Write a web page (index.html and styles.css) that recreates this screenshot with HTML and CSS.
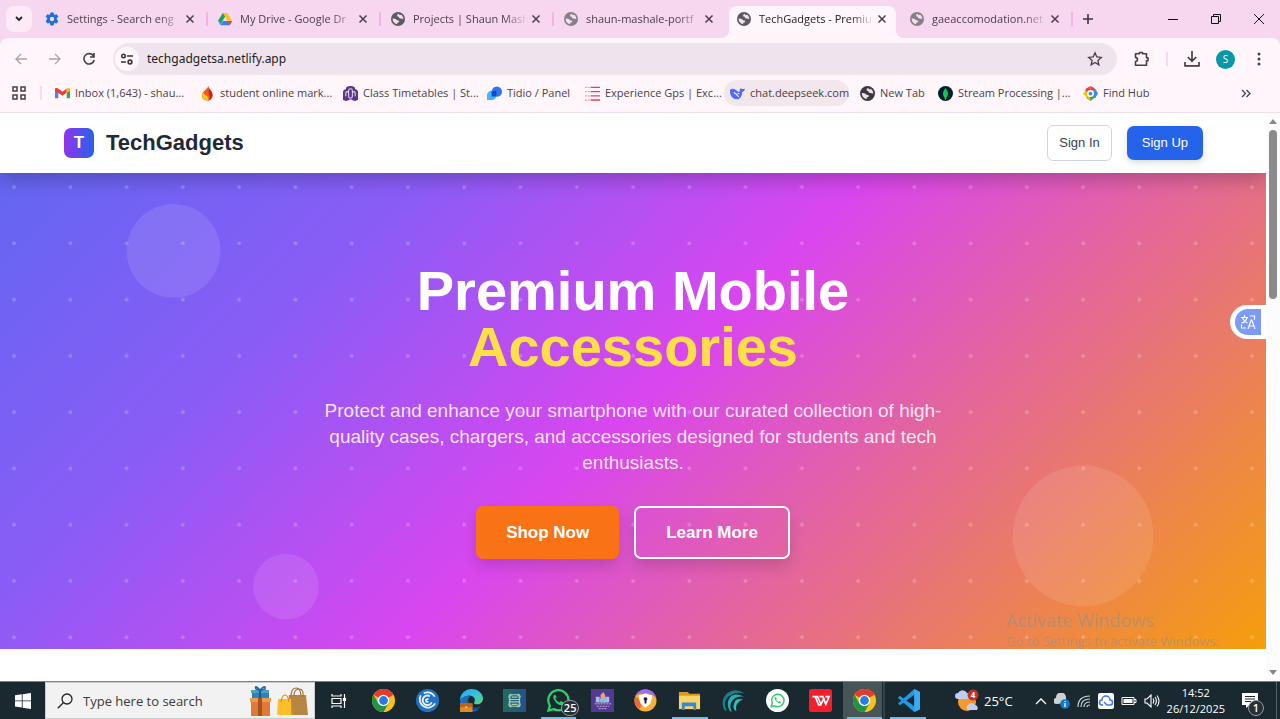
FILE: index.html
```html
<!DOCTYPE html>
<html lang="en">
<head>
<meta charset="utf-8">
<title>TechGadgets - Premium Mobile Accessories</title>
<link rel="stylesheet" href="styles.css">
</head>
<body>
<svg class="defs" aria-hidden="true">
  <symbol id="globe" viewBox="0 0 16 16"><circle cx="8" cy="8" r="8" fill="currentColor"/><path d="M8.500 2Q6.800 2.500 7 4.200 7.200 5.500 8.800 5.400 9 7 10.500 7.400 12.500 7.200 14.200 8.200 14 4.600 11.500 2.900L10.200 3.600zM1.800 7.500Q2 12.600 7 14.100L7.200 12.300Q9.500 12 9.600 10.300 8.500 9.500 6.800 9.300 6.300 7.700 4.300 7.600z" fill="#f6def1"/></symbol>
  <symbol id="x" viewBox="0 0 10 10"><path d="M1.500 1.500l7 7M8.500 1.500l-7 7" stroke="currentColor" stroke-width="1.500" fill="none"/></symbol>
  <symbol id="chrome" viewBox="0 0 24 24"><circle cx="12" cy="12" r="12" fill="#fbc116"/><path d="M12 12L1.600 6A12 12 0 0 1 22.400 6z" fill="#e33b2e"/><path d="M12 6h10.400A12 12 0 0 0 12 0z" fill="#e33b2e"/><path d="M1.600 6A12 12 0 0 0 12 24l5.200-9L12 12 6.800 15z" fill="#229342"/><circle cx="12" cy="12" r="6" fill="#fff"/><circle cx="12" cy="12" r="4.600" fill="#2c7be5"/></symbol>
</svg>

<header class="browser">
  <div class="tabstrip">
    <button class="tab-search" aria-label="Search tabs"><svg width="10" height="8" viewBox="0 0 10 8"><path d="M2 2l3 3 3-3" fill="none" stroke="#222" stroke-width="1.800"/></svg></button>
    <div class="tabs">
      <div class="tab"><svg class="fav" viewBox="0 0 16 16"><path d="M6.700 1h2.600l.5 2 1.500.8 2-.7 1.400 2.300-1.500 1.500v1.900l1.500 1.500-1.400 2.400-2-.6-1.500.8-.5 2.100H6.700l-.5-2.100-1.500-.8-2 .6-1.400-2.400 1.500-1.500V6.900L1.300 5.400l1.400-2.300 2 .7L6.200 3z" fill="#1a6fe0" stroke="#1a6fe0"/><circle cx="8" cy="8" r="2.500" fill="#f6d7ef"/></svg><span class="title">Settings - Search eng</span><button class="close" aria-label="Close tab"><svg><use href="#x"/></svg></button></div>
      <div class="tab"><svg class="fav" viewBox="0 0 16 16"><path d="M5.500 1h5L8 5.500 3 14 0 10z" fill="#1fa363"/><path d="M5.500 1h5L16 10h-5z" fill="#fcc20f"/><path d="M0 10.200L2.800 15h10.400L16 10.200H5.600L3 14.500z" fill="#3f7ee8"/><path d="M11 10.200h5L13.300 15z" fill="#e8453c"/></svg><span class="title">My Drive - Google Dr</span><button class="close" aria-label="Close tab"><svg><use href="#x"/></svg></button></div>
      <div class="tab"><svg class="fav"><use href="#globe"/></svg><span class="title">Projects | Shaun Mash</span><button class="close" aria-label="Close tab"><svg><use href="#x"/></svg></button></div>
      <div class="tab plain"><svg class="fav dim"><use href="#globe"/></svg><span class="title">shaun-mashale-portf</span><button class="close" aria-label="Close tab"><svg><use href="#x"/></svg></button></div>
      <div class="tab active"><svg class="fav"><use href="#globe"/></svg><span class="title">TechGadgets - Premiu</span><button class="close" aria-label="Close tab"><svg><use href="#x"/></svg></button></div>
      <div class="tab"><svg class="fav dim"><use href="#globe"/></svg><span class="title">gaeaccomodation.net</span><button class="close" aria-label="Close tab"><svg><use href="#x"/></svg></button></div>
    </div>
    <button class="new-tab" aria-label="New tab"><svg width="12" height="12" viewBox="0 0 12 12"><path d="M6 1v10M1 6h10" stroke="#42313f" stroke-width="1.600"/></svg></button>
    <div class="window-controls">
      <button aria-label="Minimise"><svg width="10" height="10" viewBox="0 0 10 10"><path d="M0 5.500h10" stroke="#111"/></svg></button>
      <button aria-label="Restore"><svg width="10" height="10" viewBox="0 0 10 10"><path d="M.5 2.500h7v7h-7zM2.500 2.500v-2h7v7h-2" fill="none" stroke="#111"/></svg></button>
      <button aria-label="Close"><svg width="10" height="10" viewBox="0 0 10 10"><path d="M0 0l10 10M10 0L0 10" stroke="#111"/></svg></button>
    </div>
  </div>

  <div class="toolbar">
    <button class="nav" aria-label="Back"><svg width="14" height="14" viewBox="0 0 14 14"><path d="M13 7H2M7 2L2 7l5 5" fill="none" stroke="#ada3ab" stroke-width="1.400"/></svg></button>
    <button class="nav" aria-label="Forward"><svg width="14" height="14" viewBox="0 0 14 14"><path d="M1 7h11M7 2l5 5-5 5" fill="none" stroke="#ada3ab" stroke-width="1.400"/></svg></button>
    <button class="nav" aria-label="Reload"><svg width="14" height="14" viewBox="0 0 14 14"><path d="M11.500 4A5.200 5.200 0 1 0 12.200 8M12 1v4H8" fill="none" stroke="#4b3d48" stroke-width="1.600"/></svg></button>
    <div class="omnibox">
      <button class="site-info" aria-label="Site information"><svg width="14" height="12" viewBox="0 0 14 12"><g fill="none" stroke="#3d333b" stroke-width="1.600"><circle cx="3.500" cy="3" r="1.700"/><path d="M7 3h6M1 9h5"/><circle cx="10" cy="9" r="1.900"/></g></svg></button>
      <input class="url" type="text" aria-label="Address" value="techgadgetsa.netlify.app">
      <button class="star" aria-label="Bookmark"><svg width="16" height="16" viewBox="0 0 16 16"><path d="M8 1.800l1.800 4.200 4.500.4-3.400 3 1 4.400L8 11.500l-3.900 2.300 1-4.400-3.400-3 4.500-.4z" fill="none" stroke="#4b3d48" stroke-width="1.300"/></svg></button>
    </div>
    <div class="tools">
      <button aria-label="Extensions"><svg width="16" height="16" viewBox="0 0 16 16"><path d="M1.500 2.800h4V1.500h3v1.300h4v4h1.500v3h-1.500v4.400h-11v-3.600c2.600-.3 2.600-3.900 0-4.200z" fill="none" stroke="#4b3d48" stroke-width="1.600" stroke-linejoin="round"/></svg></button>
      <i class="bar"></i>
      <button aria-label="Downloads"><svg width="16" height="16" viewBox="0 0 16 16"><path d="M8 0v10M3.800 6L8 10.200 12.200 6M1 11v3.800h14V11" fill="none" stroke="#4b3d48" stroke-width="1.700"/></svg></button>
      <button class="avatar" aria-label="Profile">S</button>
      <button aria-label="Menu"><svg width="4" height="14" viewBox="0 0 4 14" fill="#4b3d48"><circle cx="2" cy="2" r="1.500"/><circle cx="2" cy="7" r="1.500"/><circle cx="2" cy="12" r="1.500"/></svg></button>
    </div>
  </div>

  <nav class="bookmarks">
    <button class="apps" aria-label="Tab groups"><svg width="14" height="14" viewBox="0 0 14 14"><path d="M1 1h4v4H1zM9 1h4v4H9zM1 9h4v4H1zM9 9h4v4H9z" fill="none" stroke="#4b3d48" stroke-width="1.500"/></svg></button>
    <i class="bar"></i>
    <div class="marks">
      <a href="#"><svg viewBox="0 0 16 16"><path d="M0 3.500V13h3.500V6z" fill="#4285f4"/><path d="M12.500 6v7H16V3.500z" fill="#34a853"/><path d="M0 3.500C0 2 2 1.500 3.500 2.700L8 6.200l4.500-3.500V7L8 10.500 0 5z" fill="#ea4335"/><path d="M12.500 2.700C14 1.500 16 2 16 3.500V5l-3.500 2.500z" fill="#fbbc04"/></svg>Inbox (1,643) - shau...</a>
      <a href="#"><svg viewBox="0 0 16 16"><path d="M9 0c0 3 4.500 5 4.500 9.500C13.500 13 11 15.500 8 15.500z" fill="#c92318"/><path d="M9 0C8 3 2 6 2 10.500c0 3 2.500 5.200 6 5.200 3-1 3-4 2-6C9 7 9 5 9 0z" fill="#f05a1a"/><path d="M3 7c-2 4 0 8.500 5 8.700 2-1.500 1-4-1-5.200C5 9.500 5 8.500 3 7z" fill="#fcc51c"/></svg>student online mark...</a>
      <a href="#"><svg viewBox="0 0 16 16"><path d="M3 3.500Q3 0 8 0t5 3.500q3 .5 3 3V15q-4 2-7-.5h-2Q4 17 0 15V6.500q0-2.500 3-3z" fill="#5c3688"/><path d="M3 11V8q0-2 1.500-2T6 8v3q0 2 2 2t2-2V8q0-2 1.500-2T13 8v3M6 7V5q0-2 2-2t2 2v6" fill="none" stroke="#e8d9f3" stroke-width="1.100"/></svg>Class Timetables | St...</a>
      <a href="#"><svg viewBox="0 0 16 16"><path d="M0 15V10a5 5 0 0 1 5-5h5v5a5 5 0 0 1-5 5z" fill="#43b4f5"/><path d="M5 11V6a5.500 5.500 0 0 1 11 0 5.500 5.500 0 0 1-5.500 5.500z" fill="#2f72f2"/><path d="M5 11V6q2-1 5-1v5l-1 1z" fill="#0b4cc6"/></svg>Tidio / Panel</a>
      <a href="#"><svg viewBox="0 0 16 16"><path d="M0 1.500h6M0 6h6M0 10.500h6M0 15h6" stroke="#f5a27e" stroke-width="1.300" stroke-dasharray="2 1"/><path d="M6 1.500h10M6 6h10M6 10.500h10M6 15h10" stroke="#df4268" stroke-width="1.500"/></svg>Experience Gps | Exc...</a>
      <a href="#" class="hover"><svg viewBox="0 0 16 16"><path d="M0 4c2-1.500 4-1 6 0 1.500.8 2.500 2.500 4 2.500C10 4.500 11 3 11.500 2c.5 1 1.500 1.500 4.500 1-.5 2-1.500 3-3 3.300C13 10 12 12 9 14c-1 .3-3.800.3-5.500-1C1 11.500-.5 8 0 4z" fill="#4d6bfe"/><path d="M4 7c2 0 3 3 5.500 4.500M8 7.500l2 1" stroke="#f2e8ee" stroke-width="1.300" fill="none"/></svg>chat.deepseek.com</a>
      <a href="#"><svg class="dark"><use href="#globe"/></svg>New Tab</a>
      <a href="#"><svg viewBox="0 0 16 16"><circle cx="8" cy="8" r="8" fill="#04202b"/><path d="M8 2q5 6 .5 11.500V15h-1v-1.500Q3 8 8 2z" fill="#13c457"/></svg>Stream Processing |...</a>
      <a href="#"><svg viewBox="0 0 16 16"><path d="M8 0l4 2 1 2-5 4z" fill="#ea4335"/><path d="M8 0L3 3 2 8h6z" fill="#ea4335"/><path d="M13 3l3 5-3 5-5-5z" fill="#4285f4"/><path d="M3 9l1 4 4 3 5-4-5-4z" fill="#34a853"/><path d="M0 8l3-3 4 4 1 7z" fill="#fbbc04"/><circle cx="8" cy="8" r="3.700" fill="#fff"/><circle cx="8" cy="8" r="2" fill="#4285f4"/></svg>Find Hub</a>
    </div>
    <button class="more" aria-label="More bookmarks"><svg width="10" height="9" viewBox="0 0 10 9"><path d="M1 1l3.500 3.500L1 8M5.500 1L9 4.500 5.500 8" fill="none" stroke="#4b3d48" stroke-width="1.300"/></svg></button>
  </nav>
</header>

<div class="viewport">
  <div class="page">
    <header class="site-header">
      <a class="brand" href="#"><span class="logo">T</span><span>TechGadgets</span></a>
      <div class="auth"><button class="sign-in">Sign In</button><button class="sign-up">Sign Up</button></div>
    </header>
    <main class="hero">
      <svg class="dots" viewBox="0 0 1350 508" preserveAspectRatio="xMinYMin slice" aria-hidden="true">
        <defs><pattern id="dot" width="60" height="60" patternUnits="userSpaceOnUse"><circle cx="15" cy="15" r="2" fill="#fff" fill-opacity=".22"/></pattern></defs>
        <rect width="1350" height="508" fill="url(#dot)"/>
        <g fill="#fff" fill-opacity=".1"><circle cx="185" cy="83" r="50"/><circle cx="305" cy="441" r="35"/><circle cx="1155" cy="387" r="75"/></g>
      </svg>
      <div class="hero-copy">
        <h1>Premium Mobile<span>Accessories</span></h1>
        <p>Protect and enhance your smartphone with our curated collection of high-quality cases, chargers, and accessories designed for students and tech enthusiasts.</p>
        <div class="cta"><button class="shop">Shop Now</button><button class="learn">Learn More</button></div>
      </div>
    </main>
    <button class="translate" aria-label="Translate"><svg width="26" height="26" viewBox="0 0 26 26"><path d="M26 0H13a13 13 0 0 0 0 26h13z" fill="#7b9bfb"/><g fill="none" stroke="#fff" stroke-width="1.200"><path d="M6 8.500h7M9.500 6v2.500M7.500 9q2 4 5 5M12 9q-1.500 4-5.500 5M15 7h4.500v3.500M6.500 15.500V19H11M13 20l3.200-9h.6L20 20M14 17h5"/></g></svg></button>
    <div class="watermark"><strong>Activate Windows</strong><span>Go to Settings to activate Windows.</span></div>
  </div>
  <div class="scrollbar"><i class="arrow up"></i><i class="thumb"></i><i class="arrow down"></i></div>
</div>

<footer class="taskbar">
  <button class="start" aria-label="Start"><svg width="16" height="16" viewBox="0 0 16 16" fill="#fff"><path d="M0 2.300L6.800 1.300V7.500H0zM7.600 1.200L16 0v7.500H7.600zM0 8.300h6.800v6.200L0 13.600zM7.600 8.300H16V16l-8.400-1.300z"/></svg></button>
  <label class="search">
    <svg width="16" height="16" viewBox="0 0 16 16"><circle cx="10" cy="6" r="5" fill="none" stroke="#222" stroke-width="1.300"/><path d="M6.500 9.500L.8 15.200" stroke="#222" stroke-width="1.300"/></svg>
    <input type="text" placeholder="Type here to search" aria-label="Type here to search">
    <svg width="58" height="32" viewBox="0 0 58 32"><path d="M2 6h17v8H2z" fill="#2f83b5"/><path d="M1 5h18v3H1z" fill="#4ba0cd"/><path d="M10 5Q4-1 6 4zM10 5q6-6 5-1z" stroke="#23699b" stroke-width="1.500" fill="none"/><path d="M1 16h19v15H1z" fill="#e07b35"/><path d="M0 13h21v4H0z" fill="#ee9850"/><path d="M8 13h4v18H8z" fill="#a8521e"/><path d="M9 5h2v8H9z" fill="#1c5c8c"/><path d="M39 10h17l2 20H37z" fill="#b78643"/><path d="M41 12q0-9 5-9t5 9M44 11q0-7 5-7t4 8" fill="none" stroke="#a47034" stroke-width="1.200"/><path d="M28 14h13v16H27z" fill="#fcbf29"/><path d="M41 14l2 16h-2z" fill="#d99618"/><path d="M31 17q1-7 4-7t4 7" fill="none" stroke="#df8d14" stroke-width="1.200"/></svg>
  </label>
  <button class="task-view" aria-label="Task view"><svg width="16" height="16" viewBox="0 0 16 16" fill="none" stroke="#fff" stroke-width="1.200"><path d="M1 1v2h9V1M1 5.500h9v5H1zM1 15v-2h9v2M13.500 1v14"/><path d="M12.500 5.500h2v2h-2z" fill="#fff"/></svg></button>
  <div class="pinned">
    <button aria-label="Chrome"><svg><use href="#chrome"/></svg></button>
    <button aria-label="Remote client"><svg viewBox="0 0 24 24"><circle cx="12" cy="12" r="12" fill="#2371c4"/><path d="M5 6.500A8.500 8.500 0 0 0 20 15M19.500 8A8.500 8.500 0 0 0 8 4.500M14.500 7.500A5 5 0 1 0 16.500 14M13 11a1.500 1.500 0 1 0 0 2" fill="none" stroke="#e8f3ff" stroke-width="1.900"/></svg></button>
    <button aria-label="Edge"><svg viewBox="0 0 24 24"><defs><linearGradient id="edge" x2="1" y2="1"><stop stop-color="#2fa4e8"/><stop offset=".5" stop-color="#35c1e0"/><stop offset="1" stop-color="#63d36c"/></linearGradient></defs><path d="M0 12a12 12 0 0 1 12-12c7 0 12 5 12 10 0 4-3 6-6 6-3 0-4-1-3-2.500C17 10 13 6 8 7c-4 1-7 3-8 5z" fill="url(#edge)"/><path d="M0 12C2 8 7 6 11 8c-4 2-5 8 0 12 3 2 7 2 10 0-4 4-11 5-16 2-3-2-5-6-5-10z" fill="#1a6fc4"/><path d="M11 8c-4 3-4 9 2 11 4 1 7 0 9-2-1 4-6 6-10 4-5-2-6-10-1-13z" fill="#124f96"/><path d="M0 15h13v9H0z" fill="#e08a22"/><path d="M0 15h13v4H0z" fill="#b5661a"/><path d="M4 15v-2h5v2" fill="none" stroke="#8b4a10"/><path d="M5.500 18h2v2h-2z" fill="#fbc74d"/></svg></button>
    <button aria-label="Scanner"><svg viewBox="0 0 24 24"><defs><linearGradient id="scan"><stop stop-color="#226b61"/><stop offset="1" stop-color="#22528a"/></linearGradient></defs><path d="M0 0h24v24H0z" fill="url(#scan)"/><g fill="none" stroke="#a8d2b7" stroke-width="1.200"><rect x="7" y="6" width="10" height="12" rx="3"/><path d="M6 9Q6 5.500 9 5.500M15 5.500q3 0 3 3.500M6 15q0 3.500 3 3.500M15 18.500q3 0 3-3.500M6 11h12M6 13.500h12M9 8.500h6M9 16h6"/></g></svg></button>
    <button class="open" aria-label="WhatsApp, 25 notifications"><svg viewBox="0 0 24 24"><path d="M1.500 22.500L3 17.300A10.500 10.500 0 1 1 7 21z" fill="none" stroke="#30ce68" stroke-width="2.400"/><path d="M8 6q-3 2 0 6 3 5 7 5 3-1 2.500-3L14.500 12.500 13 14q-3-1-4.500-4L10 8.500 8.500 6z" fill="#30ce68"/></svg><b class="count">25</b></button>
    <button aria-label="Portal"><svg viewBox="0 0 24 24"><path d="M0 0h24v24H0z" fill="#553990"/><path d="M5 8h4v6H5zM15 8h4v6h-4z" fill="#a8bbeb"/><path d="M10 6l3-3 2 4v7h-5z" fill="#e8a17c"/><path d="M9 10h7v4H9z" fill="#7fc2e7"/><path d="M4 15.500h17M6 18h13M8 20.500h9" stroke="#cdbde7" stroke-dasharray="2 1"/></svg></button>
    <button aria-label="Secure browser"><svg viewBox="0 0 24 24"><circle cx="12" cy="12" r="11.500" fill="#f9b233"/><path d="M9 .9A11.500 11.500 0 0 1 23.300 10C21 5 15 3.500 9 5z" fill="#7a4be0"/><path d="M9 .9A11.500 11.500 0 0 0 1 8q4-4 9-3 8-1 13 4Q19-1 9 .9z" fill="#9b6cf0"/><path d="M1 8Q-1 16 5 21l3-3-4-9z" fill="#f1663c"/><path d="M12 4.500q4 2 7 2 0 9-7 13-7-4-7-13 3 0 7-2z" fill="#fff"/><path d="M12 8.500a2 2 0 0 1 1 3.700V15h-2v-2.800a2 2 0 0 1 1-3.700z" fill="#25203a"/></svg></button>
    <button class="open" aria-label="File Explorer"><svg viewBox="0 0 24 24"><path d="M1 3h9l2 2h11v4H1z" fill="#d99a20"/><path d="M1 7h22v14H1z" fill="#fbd466"/><path d="M4 22v-8h15v8h-3v-4H7v4z" fill="#3689d4"/></svg></button>
    <button aria-label="Wave"><svg viewBox="0 0 24 24"><path d="M24 5Q15-2 6 4-2 11 2 21q1 1 3 2Q0 12 8 7q7-5 16-2z" fill="#17808d"/><path d="M23 8Q13 3 8 9q-4 6 0 14l2 1Q7 16 11 12q4-5 12-4z" fill="#24aeb5"/><path d="M22 11q-7-2-9 3-2 4 0 8l2 1q-1-5 1-8 2-3 6-4z" fill="#2fc0c4"/></svg></button>
    <button aria-label="WhatsApp Web"><svg viewBox="0 0 24 24"><circle cx="12" cy="12" r="12" fill="#fff"/><path d="M5.500 18.500l1-3.700A6.500 6.500 0 1 1 9 17.500z" fill="none" stroke="#36c86b" stroke-width="1.500"/><path d="M9.500 8q-1.500 1.500 1 4.500 2 2.500 4 2.500l1.300-1.500-2-1-1 1q-1.500-1-2.300-2.700l1-1z" fill="#36c86b"/></svg></button>
    <button aria-label="WPS Office"><svg viewBox="0 0 24 24"><rect width="24" height="24" rx="3" fill="#f51e2c"/><path d="M3.500 8H9l3.500 8L16 9M6.500 8l3.500 8.500h2.500M11 8h3.500l3 8L21 8h-4" fill="none" stroke="#fff" stroke-width="1.700"/></svg></button>
    <button class="open current" aria-label="Chrome window"><svg><use href="#chrome"/></svg></button>
    <button class="open" aria-label="VS Code"><svg viewBox="0 0 24 24"><path d="M18 0l6 3v18l-6 3L1 9l2-2 15 11V6L3 17l-2-2z" fill="#2598e4"/><path d="M18 0l6 3v18l-6 3z" fill="#38adf4"/></svg></button>
  </div>
  <div class="tray">
    <button class="weather"><svg width="24" height="24" viewBox="0 0 24 24"><circle cx="12" cy="13" r="9" fill="#f69a2d"/><path d="M3 10a3 3 0 0 1 0-6 5 5 0 0 1 9 0 3 3 0 0 1 0 6zM13 21a3 3 0 0 1 0-5 4 4 0 0 1 7 0 3 3 0 0 1 2 5z" fill="#bccff2"/><circle cx="18" cy="6" r="5.500" fill="#c7302b"/><text x="18" y="9" text-anchor="middle" class="alert">4</text></svg>25°C</button>
    <button aria-label="Hidden icons"><svg width="12" height="8" viewBox="0 0 12 8"><path d="M1 7l5-5 5 5" fill="none" stroke="#fff" stroke-width="1.300"/></svg></button>
    <button aria-label="Sync"><svg width="16" height="16" viewBox="0 0 16 16"><path d="M3 11a3 3 0 0 1-1-6 5 5 0 0 1 10-1v6z" fill="#ced0d1"/><circle cx="11" cy="11" r="4.800" fill="#1478cc"/><path d="M11 10v4M11 8v1" stroke="#fff" stroke-width="1.300"/></svg></button>
    <button aria-label="Network"><svg width="14" height="14" viewBox="0 0 14 14" fill="none" stroke="#cfd5d7" stroke-width="1.200"><path d="M1 13Q1 2 13 2M4 13q0-8 9-8M7 13q0-5 6-5M10 13q0-2 3-2"/></svg></button>
    <button aria-label="Cloud"><svg width="16" height="16" viewBox="0 0 16 16"><rect width="16" height="16" rx="2" fill="#fff"/><path d="M5 12H4a2.500 2.500 0 0 1 0-5 4 4 0 0 1 8 0 2.500 2.500 0 0 1 0 5H9L6 9" fill="none" stroke="#3d77e8" stroke-width="1.500"/></svg></button>
    <button aria-label="Battery"><svg width="16" height="10" viewBox="0 0 16 10"><path d="M1 1.500h12v7H1zM13 3.500h2v3h-2" fill="none" stroke="#fff"/><path d="M2.500 3h9v4h-9z" fill="#fff"/></svg></button>
    <button aria-label="Volume"><svg width="16" height="14" viewBox="0 0 16 14" fill="none" stroke="#fff" stroke-width="1.100"><path d="M1 5h2l4-4v12L3 9H1zM9 4.500q1.500 2.500 0 5M11 3q2.800 4 0 8M13 1.500q4 5.500 0 11"/></svg></button>
    <time class="clock"><span>14:52</span><span>26/12/2025</span></time>
    <button class="notes" aria-label="1 notification"><svg width="16" height="16" viewBox="0 0 16 16"><path d="M0 0h16v12H8l-4 3v-3H0z" fill="#fff"/><path d="M3 3.500h10M3 6h10M3 8.500h6" stroke="#1a292f"/></svg><b class="count">1</b></button>
  </div>
</footer>
</body>
</html>
```
FILE: styles.css
```css
* { box-sizing: border-box; }
body {
  margin: 0;
  height: 100vh;
  display: flex;
  flex-direction: column;
  overflow: hidden;
  font: 11px/16px "Open Sans", "Noto Sans", sans-serif;
  color: #4b4148;
}
button {
  display: flex;
  align-items: center;
  justify-content: center;
  flex: none;
  padding: 0;
  border: 0;
  background: none;
  font: inherit;
  color: inherit;
}
a { color: inherit; text-decoration: none; }
input { border: 0; padding: 0; background: none; outline: 0; min-width: 0; }
svg { flex: none; display: block; }
.defs { position: absolute; width: 0; height: 0; }
.bar { width: 2px; height: 14px; background: #f9daf2; }

/* Browser frame */
.browser { background: #f6d7ef; }
.tabstrip { display: flex; align-items: center; height: 38px; }
.tab-search { width: 26px; height: 26px; margin: 0 3px 0 6px; border-radius: 8px; background: #fdeaf8; }
.tabs { display: flex; flex: 0 1 1038px; min-width: 0; align-self: stretch; }
.tab {
  position: relative;
  flex: 1 1 0;
  min-width: 0;
  display: flex;
  align-items: center;
  padding: 0 10px;
}
.tab::after {
  content: "";
  position: absolute;
  right: 0;
  width: 2px;
  height: 14px;
  background: #f3b3e4;
}
.tab.plain::after { display: none; }
.fav { width: 14px; height: 14px; color: #5b5a61; }
.fav.dim { color: #858087; }
.title {
  flex: 1;
  margin-left: 8px;
  overflow: hidden;
  white-space: nowrap;
  -webkit-mask-image: linear-gradient(90deg, #000 80%, transparent);
  mask-image: linear-gradient(90deg, #000 80%, transparent);
}
.close { width: 16px; height: 16px; color: #4c3e49; }
.close svg { width: 10px; height: 10px; }
.tab.active { z-index: 1; color: #1f1a1e; }
.tab.active::before {
  content: "";
  position: absolute;
  z-index: -1;
  inset: 6px 4px 0 2px;
  border-radius: 8px 8px 0 0;
  background: #fff6fb;
}
.tab.active::after {
  inset: auto -4px 0 -6px;
  z-index: -1;
  width: auto;
  height: 8px;
  background:
    radial-gradient(circle at 0 0, transparent 8px, #fff6fb 8px) left / 8px 8px no-repeat,
    radial-gradient(circle at 100% 0, transparent 8px, #fff6fb 8px) right / 8px 8px no-repeat;
}
.new-tab { width: 26px; height: 26px; margin-left: 2px; }
.window-controls { display: flex; margin-left: auto; }
.window-controls button { width: 43px; height: 38px; }

.toolbar {
  display: flex;
  align-items: center;
  height: 42px;
  padding: 0 13px 0 4px;
  border-radius: 8px 8px 0 0;
  background: #fff6fb;
}
.nav { width: 34px; height: 32px; }
.omnibox {
  flex: 1;
  display: flex;
  align-items: center;
  gap: 8px;
  height: 32px;
  margin-left: 7px;
  padding: 0 14px 0 2px;
  border-radius: 16px;
  background: #efe4ee;
}
.site-info { width: 24px; height: 24px; border-radius: 50%; background: #fff6fb; }
.url { flex: 1; font: 12px/20px "Noto Sans", "Open Sans", sans-serif; color: #221c20; }
.tools { display: flex; align-items: center; gap: 16px; padding-left: 17px; }
.avatar {
  width: 19px;
  height: 19px;
  border-radius: 50%;
  background: #0797a7;
  color: #fff;
  font-size: 10px;
}
.tools button:last-child { width: 16px; }

.bookmarks {
  display: flex;
  align-items: center;
  height: 33px;
  padding: 0 0 6px 12px;
  border-bottom: 1px solid #f2dfea;
  background: #fff6fb;
}
.apps { margin-right: 14px; }
.marks {
  flex: 1;
  display: grid;
  grid-template-columns: 145px 143px 144px 98px 145px 130px 78px 145px auto;
  justify-content: start;
  margin-left: 7px;
}
.marks a {
  display: flex;
  align-items: center;
  gap: 5px;
  justify-self: start;
  height: 26px;
  padding: 0 6px;
  border-radius: 13px;
  white-space: nowrap;
}
.marks svg { width: 15px; height: 15px; }
.marks .dark { color: #3c3a3f; }
.marks .hover { padding-right: 0; background: #f2e7ed; }
.more { width: 20px; margin-right: 24px; }

/* Web page */
.viewport { flex: 1; min-height: 0; display: flex; }
.page {
  position: relative;
  flex: 1;
  overflow: hidden;
  background: #fff;
  font-family: "Liberation Sans", Arial, sans-serif;
}
.site-header {
  position: relative;
  z-index: 1;
  display: flex;
  align-items: center;
  justify-content: space-between;
  height: 60px;
  padding: 0 63px 0 64px;
  background: #fff;
  box-shadow: 0 8px 16px rgba(0, 0, 0, .2);
}
.brand { display: flex; align-items: center; gap: 12px; font-size: 22px; font-weight: 700; color: #1f2937; }
.logo {
  width: 30px;
  height: 30px;
  border-radius: 7px;
  background: linear-gradient(90deg, #9333ea, #2563eb);
  color: #fff;
  font-size: 17px;
  line-height: 30px;
  text-align: center;
}
.auth { display: flex; align-items: center; gap: 15px; font-size: 13px; }
.sign-in { height: 36px; padding: 0 11px; border: 1px solid #d1d5db; border-radius: 6px; color: #374151; }
.sign-up {
  height: 34px;
  padding: 0 15px;
  border-radius: 7px;
  background: #2563eb;
  color: #fff;
  box-shadow: 0 3px 6px rgba(0, 0, 0, .14);
}
.hero {
  position: relative;
  padding: 90px 24px;
  background: linear-gradient(135deg, #6366f1, #8b5cf6 25%, #d946ef 50%, #f59e0b);
}
.dots { position: absolute; inset: 0; width: 100%; height: 100%; }
.hero-copy { position: relative; max-width: 630px; margin: 0 auto; text-align: center; }
h1 { margin: 0 0 23px; font-size: 56px; line-height: 56px; color: #fff; }
h1 span { display: block; color: #fde047; }
.hero p { margin: 0 0 30px; font-size: 19px; line-height: 26px; color: rgba(255, 255, 255, .85); }
.cta { display: flex; justify-content: center; gap: 15px; }
.cta button {
  height: 53px;
  padding: 0 30px;
  border-radius: 7px;
  color: #fff;
  font-size: 17px;
  font-weight: 700;
  box-shadow: 0 8px 14px rgba(0, 0, 0, .13);
}
.shop { background: #f97316; }
.cta .learn { border: 2px solid #fff; }
.translate {
  position: absolute;
  top: 192px;
  right: 0;
  width: 36px;
  height: 34px;
  border-radius: 17px 0 0 17px;
  background: #fff;
}
.watermark {
  position: absolute;
  left: 1006px;
  top: 495px;
  display: flex;
  flex-direction: column;
  font: 13px/18px "Open Sans", "Noto Sans", sans-serif;
  color: rgba(150, 145, 140, .6);
  white-space: nowrap;
}
.watermark strong { font-size: 18px; line-height: 24px; font-weight: 400; }

.scrollbar {
  width: 14px;
  display: flex;
  flex-direction: column;
  align-items: center;
  padding: 6px 0 6px;
  background: #fcfcfc;
}
.arrow { border: 4px solid transparent; }
.up { border-top: 0; border-bottom: 5px solid #888; }
.down { border-bottom: 0; border-top: 5px solid #888; margin-top: auto; }
.thumb { width: 8px; height: 169px; margin-top: 6px; border-radius: 4px; background: #8b8b8b; }

/* Taskbar */
.taskbar {
  display: flex;
  height: 38px;
  border-top: 1px solid #76867f;
  background: #1a292f;
  color: #fff;
}
.start { width: 45px; }
.search {
  display: flex;
  align-items: center;
  width: 270px;
  padding: 0 6px 0 11px;
  border: 1px solid #c9cccc;
  background: #f2f2f2;
}
.search input { flex: 1; margin-left: 10px; font: 13px/20px "Open Sans", "Noto Sans", sans-serif; }
.search input::placeholder { color: #3a3a3a; opacity: 1; }
.task-view { width: 47px; }
.pinned { display: grid; grid-template-columns: repeat(13, 1fr); width: 568px; }
.pinned button { position: relative; }
.pinned svg { width: 23px; height: 23px; }
.pinned .open::after {
  content: "";
  position: absolute;
  inset: auto 4px 0;
  height: 2px;
  background: #76b9ed;
}
.pinned .current { background: linear-gradient(90deg, #475458 39px, #1a292f 39px, #1a292f 40px, #354348 40px, #354348 42px, transparent 42px); }
.count {
  position: absolute;
  right: 1px;
  bottom: 3px;
  min-width: 16px;
  height: 16px;
  padding: 0 2px;
  border: 1px solid #929a9d;
  border-radius: 8px;
  background: #263136;
  font-size: 11px;
  line-height: 14px;
  font-weight: 600;
}
.tray { flex: 1; display: flex; align-items: center; justify-content: flex-end; gap: 7px; }
.weather { gap: 5px; margin-right: 15px; font-size: 13px; }
.alert { fill: #fff; font-size: 8px; font-weight: 700; }
.clock { display: flex; flex-direction: column; align-items: center; font-size: 11px; }
.notes { position: relative; width: 45px; height: 37px; margin-right: 3px; padding-right: 8px; border-right: 1px solid #536065; }
.notes .count { right: 12px; }
```
